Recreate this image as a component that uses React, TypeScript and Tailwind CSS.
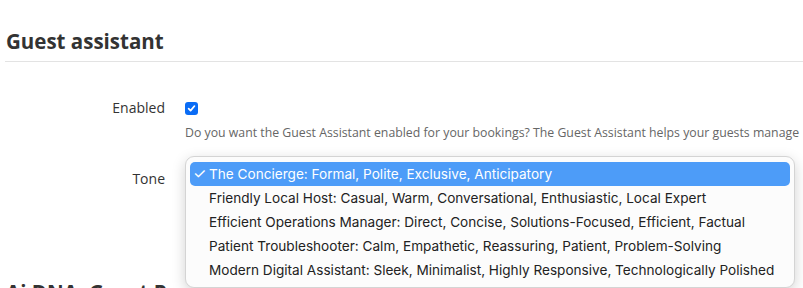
import React from "react";

const options = [
  "The Concierge: Formal, Polite, Exclusive, Anticipatory",
  "Friendly Local Host: Casual, Warm, Conversational, Enthusiastic, Local Expert",
  "Efficient Operations Manager: Direct, Concise, Solutions-Focused, Efficient, Factual",
  "Patient Troubleshooter: Calm, Empathetic, Reassuring, Patient, Problem-Solving",
  "Modern Digital Assistant: Sleek, Minimalist, Highly Responsive, Technologically Polished",
];

export default function App() {
  return (
    <div
      className="w-[803px] h-[288px] overflow-hidden bg-white text-[#333]"
      style={{ fontFamily: '"Open Sans", sans-serif' }}
    >
      <div className="pl-[6px] pt-[26px]">
        <h2 className="text-[20.5px] font-bold leading-[30px] text-[#333]">Guest assistant</h2>
      </div>
      <div className="ml-[5px] mt-[5px] h-px bg-[#e3e3e3]" />
      <div className="mt-[36px] flex flex-col">
        <div className="flex">
          <div className="w-[165px] shrink-0 text-right text-[14px] leading-[20px]">Enabled</div>
          <div className="ml-[20px] flex flex-col">
            <div className="h-[20px] flex items-center">
              <span className="w-[13px] h-[13px] rounded-[3px] bg-[#0a6cf5] flex items-center justify-center">
                <svg width="9" height="9" viewBox="0 0 10 10">
                  <path d="M1.8 5.2 L4 7.4 L8.3 2.3" fill="none" stroke="white" strokeWidth="1.9" strokeLinecap="round" strokeLinejoin="round" />
                </svg>
              </span>
            </div>
            <div className="mt-[5px] text-[12.3px] leading-[20px] text-[#666] whitespace-nowrap">
              Do you want the Guest Assistant enabled for your bookings? The Guest Assistant helps your guests manage
            </div>
          </div>
        </div>
        <div className="mt-[26px] flex">
          <div className="w-[165px] shrink-0 text-right text-[14px] leading-[20px]">Tone</div>
          <div className="ml-[20px] relative h-[20px]">
            <div
              className="absolute left-0 top-[-13px] z-10 w-[610px] rounded-[9px] border border-[#d4d4d4] bg-[#fcfcfc] px-[4px] py-[5px] shadow-[0_4px_14px_rgba(0,0,0,0.18)]"
              style={{ fontFamily: 'Inter, "Liberation Sans", sans-serif' }}
            >
              {options.map((o, i) => (
                <div
                  key={o}
                  className={
                    i === 0
                      ? "h-[24px] flex items-center rounded-[5px] bg-[#4d9cf8] text-white text-[13.6px]"
                      : "h-[24px] flex items-center text-[#222] text-[13.6px]"
                  }
                >
                  <span className="w-[19px] pl-[3px] shrink-0 text-[15px]">{i === 0 ? "✓" : ""}</span>
                  <span className="whitespace-nowrap">{o}</span>
                </div>
              ))}
            </div>
          </div>
        </div>
      </div>
      <div className="pl-[6px] mt-[88px]">
        <h2 className="text-[20.5px] font-bold leading-[30px] text-[#333]">Ai DNA: Guest Persona</h2>
      </div>
    </div>
  );
}
